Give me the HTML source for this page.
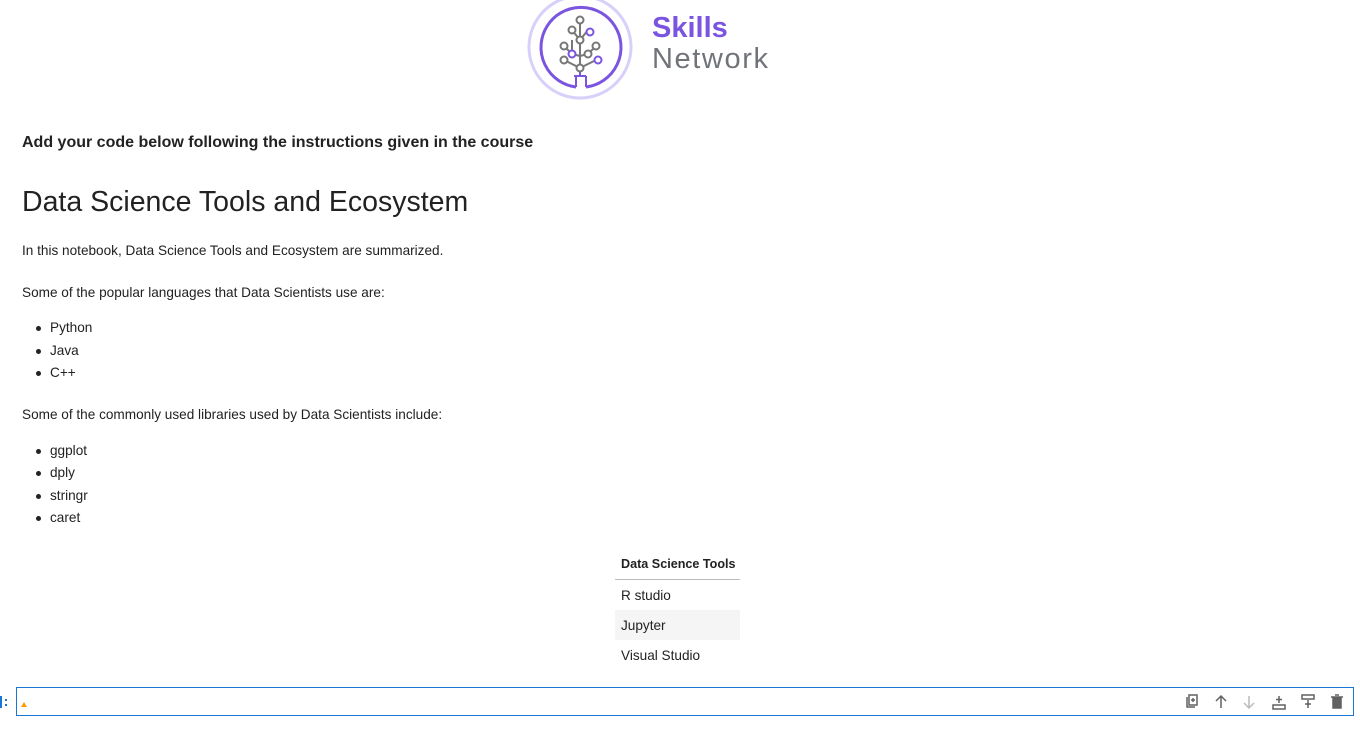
<!DOCTYPE html>
<html><head><meta charset="utf-8"><style>
body{margin:0;width:1360px;height:736px;background:#fff;font-family:"Liberation Sans",sans-serif;color:#222;position:relative;overflow:hidden}
.a{position:absolute;white-space:nowrap}
.t{font-size:13.6px}
ul{margin:0;padding:0;list-style:none}
li{position:absolute;left:50px;font-size:13.6px}
li:before{content:"";position:absolute;left:-14px;top:6px;width:5px;height:5px;border-radius:50%;background:#222}
</style></head><body>
<svg class="a" style="left:526px;top:-6px" width="110" height="108" viewBox="0 0 110 108">
<circle cx="54" cy="53" r="51" fill="none" stroke="#d8d0fa" stroke-width="3"/>
<path d="M50 93 A40 40 0 1 1 60 93" fill="none" stroke="#7b55e0" stroke-width="3"/>
<path d="M50 93 V82 M60 93 V82 M54 82 V30 M54 82 L48 82 M54 82 L60 82" stroke="#7b55e0" stroke-width="2" fill="none"/>
<g stroke="#777" stroke-width="2" fill="none">
<path d="M54 26 V76 M46 36 L54 46 L62 36 M38 52 L46 60 L54 62 M70 52 L62 60 L54 62 M38 66 L54 74 L70 66 M46 46 L46 60"/>
<circle cx="54" cy="26" r="3.5" fill="#fff"/><circle cx="46" cy="36" r="3.5" fill="#fff"/><circle cx="54" cy="46" r="3.5" fill="#fff"/>
<circle cx="38" cy="52" r="3.5" fill="#fff"/><circle cx="70" cy="52" r="3.5" fill="#fff"/><circle cx="62" cy="60" r="3.5" fill="#fff"/>
<circle cx="38" cy="66" r="3.5" fill="#fff"/><circle cx="54" cy="74" r="3.5" fill="#fff"/>
</g>
<g stroke="#7b55e0" stroke-width="2" fill="#fff"><circle cx="64" cy="38" r="3.5"/><circle cx="46" cy="60" r="3.5"/><circle cx="72" cy="66" r="3.5"/></g>
</svg>
<div class="a" style="left:652px;top:12px;font-size:29px;font-weight:bold;color:#7b55e0">Skills</div>
<div class="a" style="left:652px;top:43px;font-size:29px;color:#707478;letter-spacing:1.6px">Network</div>
<div class="a" style="left:22px;top:134px;font-size:16px;font-weight:bold;color:#222">Add your code below following the instructions given in the course</div>
<div class="a" style="left:22px;top:186px;font-size:28.5px;color:#222">Data Science Tools and Ecosystem</div>
<div class="a t" style="left:22px;top:243px">In this notebook, Data Science Tools and Ecosystem are summarized.</div>
<div class="a t" style="left:22px;top:285px">Some of the popular languages that Data Scientists use are:</div>
<ul><li style="top:320px">Python</li><li style="top:343px">Java</li><li style="top:365px">C++</li></ul>
<div class="a t" style="left:22px;top:407px">Some of the commonly used libraries used by Data Scientists include:</div>
<ul><li style="top:443px">ggplot</li><li style="top:465px">dply</li><li style="top:488px">stringr</li><li style="top:510px">caret</li></ul>
<div class="a" style="left:615px;top:548px;width:125px;height:31px;border-bottom:1px solid #bbb"></div>
<div class="a" style="left:621px;top:557px;font-weight:bold;font-size:12.6px">Data Science Tools</div>
<div class="a t" style="left:621px;top:588px">R studio</div>
<div class="a" style="left:615px;top:610px;width:125px;height:30px;background:#f5f5f5"></div>
<div class="a t" style="left:621px;top:618px">Jupyter</div>
<div class="a t" style="left:621px;top:648px">Visual Studio</div>
<div class="a" style="left:0;top:696px;width:2px;height:12px;background:#1976d2"></div>
<div class="a" style="left:5px;top:699px;width:2px;height:2px;background:#1976d2"></div>
<div class="a" style="left:5px;top:704px;width:2px;height:2px;background:#1976d2"></div>
<div class="a" style="left:16px;top:687px;width:1336px;height:27px;border:1px solid #1976d2"></div>
<div class="a" style="left:21px;top:702px;width:0;height:0;border-left:3px solid transparent;border-right:3px solid transparent;border-bottom:5px solid #f90"></div>
<svg class="a" style="left:1183px;top:693px" width="165" height="18" viewBox="0 0 165 18" fill="none" stroke="#616161" stroke-width="1.5">
<path d="M4 4 V14 H12 M6 2 H14 V12 H6 Z M10 5 V9 M8 7 H12"/>
<path d="M38 15 V3 M33 8 L38 3 L43 8"/>
<path d="M66 3 V15 M61 10 L66 15 L71 10" stroke="#bbb"/>
<path d="M90 12 H102 V16 H90 Z M96 3 V10 M93 6.5 H99"/>
<path d="M119 2 H131 V6 H119 Z M125 7 V15 M122 11 H128"/>
<path d="M150 5 H158 V15 H150 Z M148 4 H160 M152 2 H156" fill="#616161"/>
</svg>
</body></html>
